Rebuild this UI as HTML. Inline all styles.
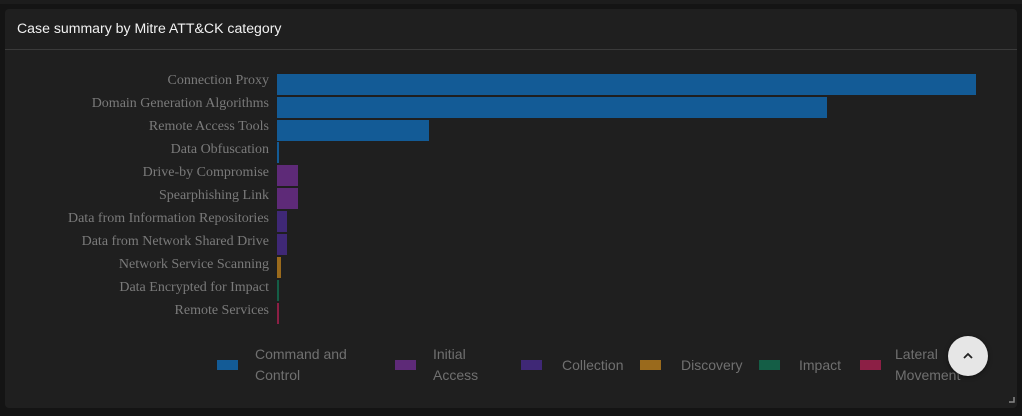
<!DOCTYPE html>
<html><head><style>
html,body{margin:0;padding:0;background:#141414;width:1022px;height:416px;overflow:hidden;position:relative;font-family:"Liberation Sans",sans-serif}
.top{position:absolute;left:0;top:0;width:1022px;height:4px;background:#1c1c1c}
.panel{position:absolute;left:5px;top:9px;width:1012px;height:399px;background:#1f1f1f;border-radius:4px}
.title{position:absolute;left:17px;top:20px;font-size:14.1px;color:#f2f2f2}
.hr{position:absolute;left:5px;top:49px;width:1012px;height:1px;background:#3a3a3a}
.lbl{position:absolute;right:753px;font-family:"Liberation Serif",serif;font-size:14px;color:#7a7a7a;white-space:nowrap;line-height:15px}
.bar{position:absolute;left:277px;height:21px}
.sw{position:absolute;top:360px;width:21px;height:10px}
.lt{position:absolute;font-size:14px;color:#707070;line-height:21px}
.btn{position:absolute;left:948px;top:336px;width:40px;height:40px;border-radius:50%;background:#e6e6e6;box-shadow:0 1px 4px rgba(0,0,0,.5)}
</style></head><body>
<div class="top"></div>
<div class="panel"></div>
<div class="title">Case summary by Mitre ATT&amp;CK category</div>
<div class="hr"></div>

<div class="lbl" style="top:73px">Connection Proxy</div>
<div class="lbl" style="top:96px">Domain Generation Algorithms</div>
<div class="lbl" style="top:119px">Remote Access Tools</div>
<div class="lbl" style="top:142px">Data Obfuscation</div>
<div class="lbl" style="top:165px">Drive-by Compromise</div>
<div class="lbl" style="top:188px">Spearphishing Link</div>
<div class="lbl" style="top:211px">Data from Information Repositories</div>
<div class="lbl" style="top:234px">Data from Network Shared Drive</div>
<div class="lbl" style="top:257px">Network Service Scanning</div>
<div class="lbl" style="top:280px">Data Encrypted for Impact</div>
<div class="lbl" style="top:303px">Remote Services</div>

<div class="bar" style="top:74px;width:699px;background:#135b96"></div>
<div class="bar" style="top:97px;width:550px;background:#135b96"></div>
<div class="bar" style="top:120px;width:152px;background:#135b96"></div>
<div class="bar" style="top:142px;width:2px;background:#135b96"></div>
<div class="bar" style="top:165px;width:21px;background:#5e2a78"></div>
<div class="bar" style="top:188px;width:21px;background:#5e2a78"></div>
<div class="bar" style="top:211px;width:10px;background:#3f2876"></div>
<div class="bar" style="top:234px;width:10px;background:#3f2876"></div>
<div class="bar" style="top:257px;width:4px;background:#9a6a1c"></div>
<div class="bar" style="top:280px;width:2px;background:#145e46"></div>
<div class="bar" style="top:303px;width:2px;background:#8c1f45"></div>

<div class="sw" style="left:217px;background:#135b96"></div>
<div class="lt" style="left:255px;top:344px">Command and<br>Control</div>
<div class="sw" style="left:395px;background:#5e2a78"></div>
<div class="lt" style="left:433px;top:344px">Initial<br>Access</div>
<div class="sw" style="left:521px;background:#3f2876"></div>
<div class="lt" style="left:562px;top:355px">Collection</div>
<div class="sw" style="left:640px;background:#9a6a1c"></div>
<div class="lt" style="left:681px;top:355px">Discovery</div>
<div class="sw" style="left:759px;background:#145e46"></div>
<div class="lt" style="left:799px;top:355px">Impact</div>
<div class="sw" style="left:860px;background:#8c1f45"></div>
<div class="lt" style="left:895px;top:344px">Lateral<br>Movement</div>

<div class="btn"><svg width="40" height="40" viewBox="0 0 40 40"><path d="M16 22 L20 18 L24 22" stroke="#222" stroke-width="1.8" fill="none"/></svg></div>
<svg style="position:absolute;left:1008px;top:396px" width="8" height="8"><path d="M6 1 V6 H1" stroke="#888" stroke-width="1.5" fill="none"/></svg>
</body></html>
